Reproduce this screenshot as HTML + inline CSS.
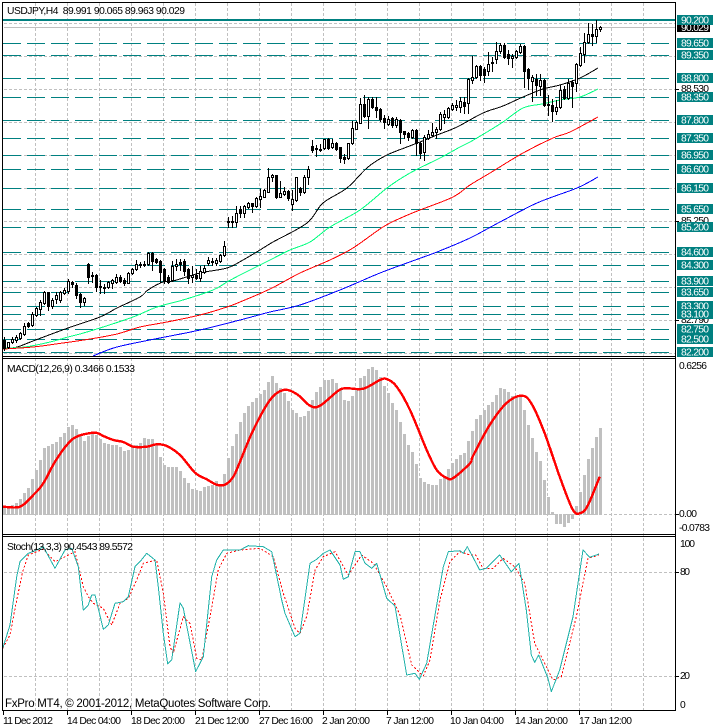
<!DOCTYPE html>
<html>
<head>
<meta charset="utf-8">
<title>USDJPY,H4</title>
<style>
html,body{margin:0;padding:0;background:#fff;width:713px;height:728px;overflow:hidden}
svg{display:block;position:absolute;left:0;top:0}
text{font-family:"Liberation Sans",sans-serif;font-size:10.3px;fill:#000}
.lab text,text.w{fill:#fff}
</style>
</head>
<body>
<svg id="s" width="713" height="728" viewBox="0 0 713 728" xmlns="http://www.w3.org/2000/svg">
<g id="grid" shape-rendering="crispEdges"></g>
<g id="macd" shape-rendering="crispEdges"></g>
<g id="plots"></g>
<g id="cand" shape-rendering="crispEdges"></g>
<g id="frame" shape-rendering="crispEdges"></g>

<text x="7" y="14" textLength="178">USDJPY,H4 &#160;89.991 90.065 89.963 90.029</text>
<text x="7" y="372" textLength="128">MACD(12,26,9) 0.3466 0.1533</text>
<text x="7" y="550" textLength="126">Stoch(13,3,3) 90.4543 89.5572</text>
<text x="5" y="707" textLength="266" style="font-size:11.5px">FxPro MT4, © 2001-2012, MetaQuotes Software Corp.</text>

<text x="3" y="724" textLength="50">11 Dec 2012</text>
<text x="67" y="724" textLength="54">14 Dec 04:00</text>
<text x="131" y="724" textLength="54">18 Dec 20:00</text>
<text x="195" y="724" textLength="54">21 Dec 12:00</text>
<text x="259" y="724" textLength="54">27 Dec 16:00</text>
<text x="322" y="724" textLength="48">2 Jan 20:00</text>
<text x="386" y="724" textLength="48">7 Jan 12:00</text>
<text x="450" y="724" textLength="54">10 Jan 04:00</text>
<text x="515" y="724" textLength="53">14 Jan 20:00</text>
<text x="579" y="724" textLength="53">17 Jan 12:00</text>

<text x="679" y="369" textLength="28">0.6256</text>
<text x="679" y="517" textLength="18">0.00</text>
<text x="679" y="531" textLength="31">-0.0783</text>
<text x="680" y="547" textLength="15">100</text>
<text x="680" y="575" textLength="10">80</text>
<text x="680" y="679" textLength="10">20</text>
<text x="680" y="708" textLength="5">0</text>

<text x="681" y="92" textLength="28">88.530</text>
<text x="681" y="224" textLength="28">85.250</text>
<text x="681" y="323" textLength="28">82.790</text>

<rect x="677" y="24" width="33" height="8" fill="#000"/>
<text class="w" x="681" y="31" textLength="28">90.029</text>

<g id="labs" class="lab"></g>
</svg>

<script>
(function(){
var NS='http://www.w3.org/2000/svg';
function add(p,n,a,t){var e=document.createElementNS(NS,n);for(var k in a)e.setAttribute(k,a[k]);if(t)e.textContent=t;document.getElementById(p).appendChild(e);return e;}
var i;
/* vertical grid */
var d='';
for(var x=35;x<=643;x+=32){d+='M'+x+'.5 3V710';}
add('grid','path',{d:d,stroke:'#c0c0c0','stroke-dasharray':'3,2',fill:'none'});
/* horizontal grid */
d='';
[23,56,89,122,155,188,221,254,287,320,353,514,572,676].forEach(function(y){d+='M4 '+y+'.5H675';});
add('grid','path',{d:d,stroke:'#c0c0c0','stroke-dasharray':'3,2',fill:'none'});
add('grid','path',{d:'M4 27.5H675',stroke:'#c0c0c0',fill:'none'});
/* levels */
var L=[[43,'89.650'],[55,'89.350'],[78,'88.800'],[97,'88.350'],[120,'87.800'],[138,'87.350'],[155,'86.950'],[169,'86.600'],[188,'86.150'],[209,'85.650'],[227,'85.200'],[252,'84.600'],[265,'84.300'],[281,'83.900'],[292,'83.650'],[306,'83.300'],[314,'83.100'],[329,'82.750'],[339,'82.500'],[352,'82.200']];
d='';
L.forEach(function(l){d+='M3 '+l[0]+'.5H675';});
add('grid','path',{d:d,stroke:'#008080','stroke-dasharray':'18,6',fill:'none'});
add('grid','rect',{x:3,y:19,width:672,height:2,fill:'#008080'});
/* labels */
[[20,'90.200']].concat(L).forEach(function(l){
 add('labs','rect',{x:677,y:l[0]-5,width:36,height:10,fill:'#008080'});
 add('labs','text',{x:681,y:l[0]+3.5,textLength:28},l[1]);
});
/* MACD bars */
var H=[475,470,465,460,447,429,414,387,360,330,294,288,282,275,260,248,231,225,237,258,273,258,247,255,267,279,282,285,285,291,303,300,288,285,279,264,267,268,285,320,345,351,351,351,363,384,399,417,420,423,411,408,405,393,405,372,324,288,252,216,
189,168,156,144,132,120,96,78,99,114,129,153,180,189,201,198,183,150,126,111,90,90,87,99,120,150,153,138,117,84,78,57,51,60,81,108,129,159,180,216,252,285,306,342,384,396,402,405,405,387,381,357,339,327,315,309,273,243,
207,195,180,165,156,135,114,117,126,138,141,141,180,225,264,306,333,390,441,486,522,522,531,519,507,468,426,375,327,294,261,234];
H.forEach(function(z,i){
 var x=3+4*i,y=350+z/3;
 if(i>=138&&i<=142)add('macd','rect',{x:x,y:514,width:3,height:y-514,fill:'#c0c0c0'});
 else add('macd','rect',{x:x,y:Math.round(y),width:3,height:515-Math.round(y),fill:'#c0c0c0'});
});
/* helper: zoom coordinates to real */
function pts(arr,ox,oy){return arr.map(function(p){return (ox+p[0]/3).toFixed(1)+','+(oy+p[1]/3).toFixed(1);}).join(' ');}
function smooth(s){
 var P=s.trim().split(/\s+/).map(function(q){var a=q.split(',');return [+a[0],+a[1]];});
 var o='M'+P[0][0]+' '+P[0][1];
 for(var k=0;k<P.length-1;k++){
  var p0=P[k>0?k-1:k],p1=P[k],p2=P[k+1],p3=P[k+2<P.length?k+2:k+1];
  o+='C'+(p1[0]+(p2[0]-p0[0])/6).toFixed(1)+' '+(p1[1]+(p2[1]-p0[1])/6).toFixed(1)+' '+(p2[0]-(p3[0]-p1[0])/6).toFixed(1)+' '+(p2[1]-(p3[1]-p1[1])/6).toFixed(1)+' '+p2[0]+' '+p2[1];
 }
 return o;
}
function line(s,c,w,dash){var a={points:s,fill:'none',stroke:c,'stroke-width':w,'shape-rendering':'crispEdges','stroke-linejoin':'round'};if(dash)a['stroke-dasharray']=dash;add('plots','polyline',a);}
function sline(s,c,w){add('plots','path',{d:smooth(s),fill:'none',stroke:c,'stroke-width':w,'shape-rendering':'crispEdges'});}
/* moving averages */
sline('3,349 17,347 33,341 68,328 100,317 117,308 140,297 148,290 163,282 173,281 200,273 227,268 243,260 260,250 273,242 307,223 323,203 347,188 368,167 387,155 407,147 420,142 437,135 457,127 483,113 503,106 523,97 543,89 560,85 580,78 598,68','#000',1);
sline('3,348 25,347 50,342 68,337 80,334 100,328 133,317 157,307 183,300 213,290 227,282 240,275 270,260 290,250 310,242 330,227 360,210 387,188 410,173 440,158 460,147 470,142 487,132 503,122 523,108 542,104 560,100 580,97 598,89','#00ff7f',1);
sline('3,349 33,347 63,343 90,339 117,334 140,327 167,322 200,315 227,307 240,302 270,289 300,273 330,260 353,248 383,227 403,217 420,210 453,197 470,185 490,173 523,153 553,138 570,132 598,117','#f00',1);
sline('93,356 117,347 160,338 200,330 240,320 270,312 300,305 340,290 380,273 418,259 437,252 470,238 500,222 537,203 577,188 598,177','#00f',1);
/* MACD signal */
var m=[pts([[8,470],[60,470],[100,435],[130,400],[165,335],[205,280],[235,258],[285,248],[310,258],[340,270],[370,276],[400,290],[440,290],[470,283],[500,288],[540,315],[585,368],[620,388],[650,404],[675,404],[700,380],[720,335]],0,350),
pts([[40,240],[90,150],[130,120],[170,132],[210,167],[240,167],[295,122],[320,115],[370,116],[420,90],[440,87],[470,110],[510,180],[560,300],[590,360],[620,384],[640,384],[690,340]],240,350),
pts([[0,318],[50,225],[100,160],[145,137],[175,160],[215,250],[260,380],[300,480],[325,488],[345,465],[380,380]],473,350)].join(' ');
sline(m,'#f00',2.4);
/* Stochastic */
var sm=[pts([[8,445],[30,375],[50,230],[60,185],[85,160],[110,150],[130,140],[165,205],[195,150],[215,145],[235,200],[250,330],[265,315],[275,285],[285,285],[310,388],[325,375],[345,310],[370,305],[385,290],[405,200],[420,185],[440,160],[465,180],[475,260],[490,400],[503,492],[515,480],[540,308],[550,325],[587,515],[610,470],[635,230],[650,180],[670,150],[690,150]],0,500),
pts([[0,150],[25,137],[70,140],[95,155],[125,300],[135,340],[165,410],[180,400],[210,190],[230,178],[250,160],[270,150],[300,195],[310,238],[325,230],[345,155],[360,155],[375,190],[395,205],[410,190],[440,295],[465,318],[500,525],[525,520],[538,538],[560,490],[610,200],[625,155],[660,152],[670,160],[682,140]],240,500),
pts([[0,172],[20,210],[40,205],[80,165],[115,215],[138,190],[160,330],[175,465],[185,487],[197,465],[225,535],[235,575],[260,510],[300,350],[330,150],[350,172],[378,162]],473,500)].join(' ');
var ss=[pts([[8,445],[30,405],[50,300],[68,215],[85,165],[110,155],[130,148],[165,185],[195,170],[225,155],[250,260],[265,290],[280,310],[310,325],[335,375],[360,310],[385,295],[410,240],[430,190],[470,180],[490,280],[510,440],[520,460],[550,350],[570,370],[590,475],[605,480],[630,350],[655,210],[680,160]],0,500),
pts([[0,150],[60,145],[100,170],[130,280],[165,385],[180,400],[200,350],[225,210],[250,170],[285,155],[325,225],[365,165],[400,190],[440,260],[480,345],[515,495],[550,528],[570,480],[600,300],[630,185],[660,155],[690,165]],240,500),
pts([[8,165],[30,205],[60,205],[90,175],[125,200],[155,250],[185,430],[240,540],[265,530],[310,350],[345,175],[378,165]],473,500)].join(' ');
line(ss,'#f00',1,'2,2');
line(sm,'#20b2aa',1);
/* candles [white?,top,bottom,high,low] */
var A=[[0,300,325,292,330],[1,307,320,305,325],[1,297,307,292,310],[1,292,300,285,305],[1,280,295,275,298],[1,258,283,248,285],[0,250,258,245,262],[1,222,254,215,258],[1,204,225,200,228],[1,186,206,180,225],[1,156,190,152,192],[0,156,198,155,210],[1,180,198,175,205],[1,165,178,155,188],[1,156,180,152,185],[1,150,158,145,162],[1,124,153,118,160],[0,126,132,122,140],[0,134,165,130,175],[0,162,185,160,200],[1,174,186,170,195],[0,72,110,70,130],[0,106,109,95,125],[0,106,140,102,152],[0,139,142,120,160],[0,140,143,133,158],[1,126,142,122,145],[1,120,128,118,145],[1,110,125,103,128],[0,110,122,105,125],[0,120,130,115,135],[1,100,128,96,130],[1,88,100,84,103],[1,72,88,60,90],[0,72,75,66,82],[0,71,74,62,78],[1,38,72,36,74],[0,38,62,36,90],[0,57,65,55,70],[0,62,96,60,125],[0,88,124,85,130],[0,112,125,105,130],[1,78,120,62,122],[1,72,78,58,90],[0,66,72,58,90],[0,62,92,58,105],[0,87,115,85,130],[1,106,112,78,125],[0,105,113,88,118],[1,92,115,78,122],[1,85,95,76,100],[1,60,70,52,76],[0,62,66,55,75],[1,60,70,55,74],[1,45,62,42,65],[1,18,45,2,48]];
var B=[[0,662,667,650,682],[0,662,667,648,680],[1,640,665,618,678],[0,628,640,618,650]];
var C=[[1,438,458,435,470],[1,430,440,425,445],[0,430,438,428,455],[1,414,438,410,440],[1,408,416,388,440],[1,390,410,388,412],[1,352,395,325,395],[1,346,352,342,362],[0,346,410,344,414],[1,400,410,362,412],[1,394,402,382,405],[0,394,414,390,420],[1,418,432,390,450],[1,352,420,350,422],[0,385,396,380,405],[1,352,395,345,398],[1,328,352,318,372],[0,258,270,240,275],[0,265,268,255,288],[0,266,269,252,272],[1,238,265,236,268],[0,236,264,234,268],[1,250,262,238,265],[0,250,267,245,270],[0,262,294,260,305],[0,290,296,282,310],[1,250,295,248,296],[1,205,250,182,252],[1,186,206,182,208],[1,133,188,113,190],[0,133,167,105,170],[1,117,167,110,205],[0,117,140,112,145],[0,141,150,110,170],[0,148,177,145,182],[0,175,185,165,204],[1,178,192,168,195],[0,175,194,172,200],[1,178,194,172,202],[0,180,216,178,250],[0,214,222,212,235],[0,220,230,215,240],[1,210,232,208,235],[0,210,250,208,285],[0,248,278,245,295],[1,230,275,226,300],[1,222,234,210,238],[1,215,225,188,228],[1,207,215,200,235],[1,163,207,155,210],[1,163,172,150,190],[1,145,172,140,175],[1,135,147,128,150],[1,134,140,120,150],[1,122,140,112,155],[0,125,137,112,158],[1,57,130,55,158]];
var E=[[1,232,240,168,250],[1,198,232,195,235],[0,198,225,195,240],[0,208,225,200,245],[1,192,212,155,225],[0,186,190,170,212],[1,152,178,126,190],[1,135,153,130,158],[0,135,172,130,175],[0,162,175,150,192],[1,168,175,162,202],[1,152,172,150,175],[1,138,156,132,160],[0,138,212,136,260],[0,208,234,205,268],[1,232,242,225,302],[0,238,256,222,285],[1,240,258,222,284],[0,240,314,238,318],[0,312,316,285,345],[0,315,332,298,362],[1,322,332,300,342],[1,270,322,255,325],[0,268,295,258,298],[1,250,295,238,297],[0,247,258,240,320],[1,192,248,190,272],[1,160,194,142,198],[1,125,162,98,185],[1,102,125,70,128],[0,102,108,72,135],[1,88,108,60,125],[1,82,88,78,92]];
var idx=0;
function draw(arr,oy){
 arr.forEach(function(c){
  var px=4+4*idx;idx++;
  var t=Math.round(oy+c[1]/3),b=Math.round(oy+c[2]/3),h=Math.round(oy+c[3]/3),l=Math.round(oy+c[4]/3);
  if(b<=t)b=t+1;
  add('cand','path',{d:'M'+px+'.5 '+h+'V'+(l+1),stroke:'#000',fill:'none'});
  if(c[0]){add('cand','rect',{x:px-0.5,y:t+0.5,width:2,height:b-t,fill:'#fff',stroke:'#000'});}
  else{add('cand','rect',{x:px-1,y:t,width:3,height:b-t+1,fill:'#000'});}
 });
}
draw(A,240);draw(B,0);draw(C,60);draw(E,0);
/* frames */
var F=[[2,2,674,1],[2,2,1,709],[675,2,1,709],[2,356,674,1],[2,358,674,1],[2,534,674,1],[2,536,674,1],[2,710,674,1]];
F.forEach(function(r){add('frame','rect',{x:r[0],y:r[1],width:r[2],height:r[3],fill:'#000'});});
/* ticks */
d='';
for(x=3;x<=579;x+=64){d+='M'+x+'.5 711V715';}
[89,221,320,514,572,676].forEach(function(y){d+='M676 '+y+'.5H679';});
add('frame','path',{d:d,stroke:'#000',fill:'none'});
})();
</script>
</body>
</html>
